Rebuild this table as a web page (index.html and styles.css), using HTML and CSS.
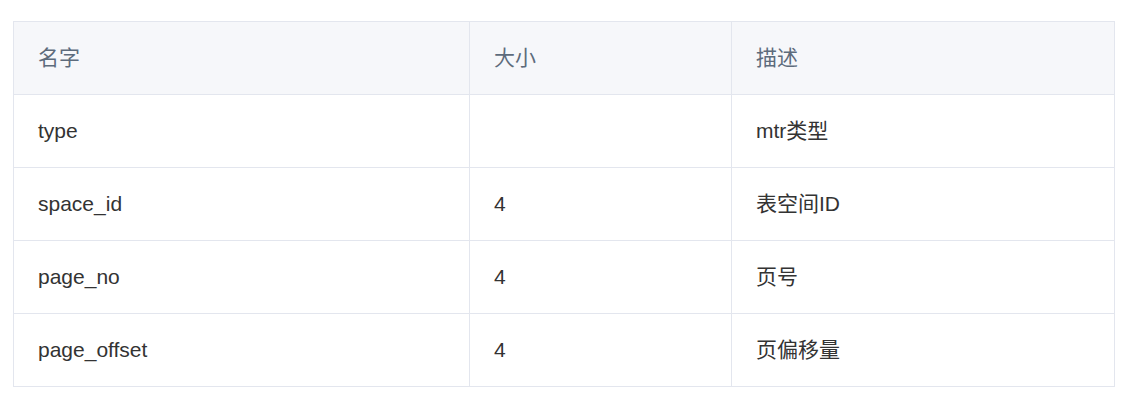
FILE: index.html
```html
<!DOCTYPE html>
<html lang="zh">
<head>
<meta charset="utf-8">
<link rel="stylesheet" href="styles.css">
</head>
<body>
<table class="grid">
  <colgroup>
    <col class="c1"><col class="c2"><col class="c3">
  </colgroup>
  <thead>
    <tr><th>名字</th><th>大小</th><th>描述</th></tr>
  </thead>
  <tbody>
    <tr><td>type</td><td></td><td>mtr类型</td></tr>
    <tr><td>space_id</td><td>4</td><td>表空间ID</td></tr>
    <tr><td>page_no</td><td>4</td><td>页号</td></tr>
    <tr><td>page_offset</td><td>4</td><td>页偏移量</td></tr>
  </tbody>
</table>
</body>
</html>
```
FILE: styles.css
```css
html, body {
  margin: 0;
  padding: 0;
  background: #ffffff;
}
body {
  padding: 21px 0 0 13px;
  font-family: "Liberation Sans", Arial, "Noto Sans CJK SC", sans-serif;
  font-size: 21px;
  color: #333333;
}
.grid {
  border-collapse: collapse;
  width: 1101px;
  table-layout: fixed;
}
.c1 { width: 456px; }
.c2 { width: 262px; }
.c3 { width: 383px; }
.grid th,
.grid td {
  border: 1px solid #e3e6ee;
  height: 73px;
  padding: 0 24px;
  text-align: left;
  vertical-align: middle;
  box-sizing: border-box;
  line-height: 1.5;
}
.grid th {
  background: #f6f7fa;
  color: #5d6b7c;
  font-weight: normal;
}
```
